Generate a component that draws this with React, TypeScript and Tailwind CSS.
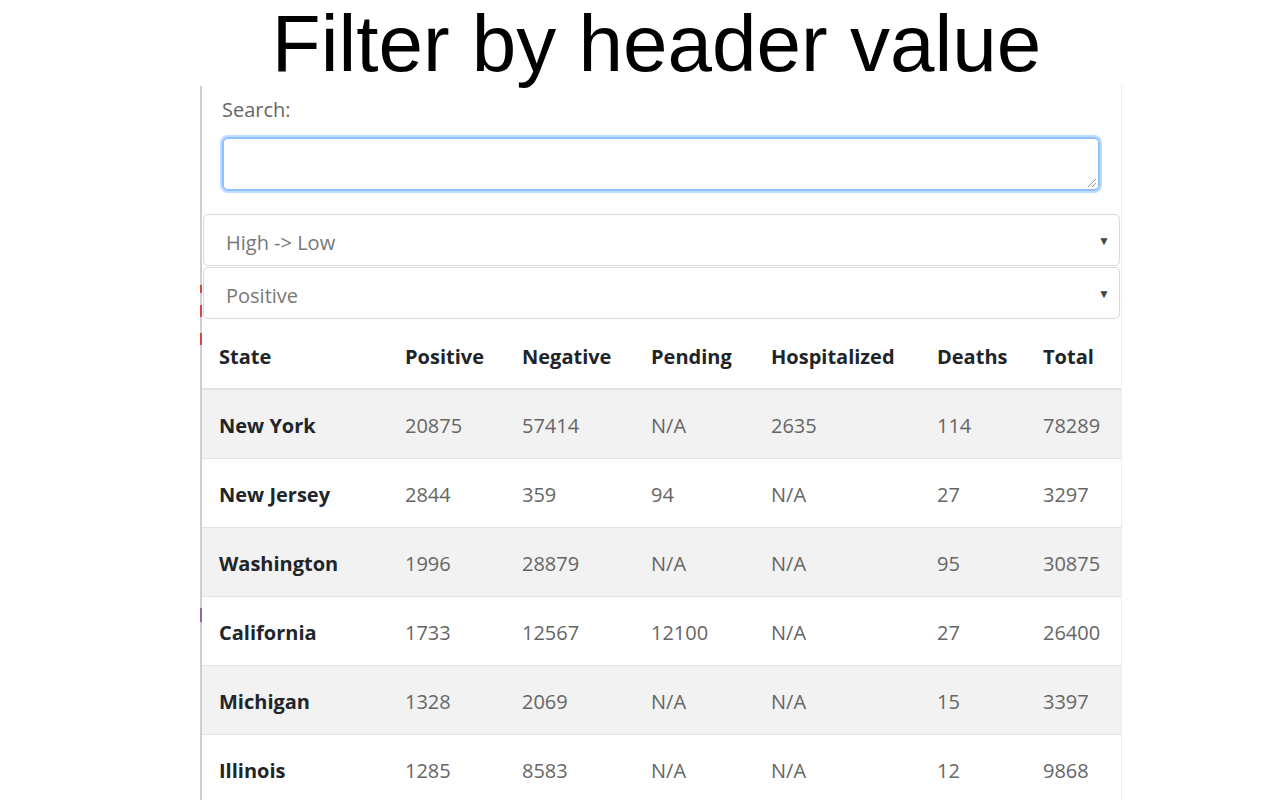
type Row = {
  state: string;
  positive: string;
  negative: string;
  pending: string;
  hospitalized: string;
  deaths: string;
  total: string;
};

const ROWS: Row[] = [
  { state: "New York", positive: "20875", negative: "57414", pending: "N/A", hospitalized: "2635", deaths: "114", total: "78289" },
  { state: "New Jersey", positive: "2844", negative: "359", pending: "94", hospitalized: "N/A", deaths: "27", total: "3297" },
  { state: "Washington", positive: "1996", negative: "28879", pending: "N/A", hospitalized: "N/A", deaths: "95", total: "30875" },
  { state: "California", positive: "1733", negative: "12567", pending: "12100", hospitalized: "N/A", deaths: "27", total: "26400" },
  { state: "Michigan", positive: "1328", negative: "2069", pending: "N/A", hospitalized: "N/A", deaths: "15", total: "3397" },
  { state: "Illinois", positive: "1285", negative: "8583", pending: "N/A", hospitalized: "N/A", deaths: "12", total: "9868" },
];

const HEADERS = ["State", "Positive", "Negative", "Pending", "Hospitalized", "Deaths", "Total"];

function SelectBox({ label }: { label: string }) {
  return (
    <div className="mx-px flex h-[52px] items-center justify-between rounded-[5px] border border-[#d9d9d9] bg-white pl-[22px] pr-[9px]">
      <span className="pt-[5px] text-[20px] text-[#777]">{label}</span>
      <span className="pt-[1px] text-[12px] text-[#444]">▼</span>
    </div>
  );
}

export default function App() {
  return (
    <div className="h-[800px] overflow-hidden bg-white font-['Open_Sans',sans-serif]">
      <h1 className="h-[86px] pl-[33px] pt-[4px] text-center font-['Liberation_Sans',Arial,sans-serif] text-[80px] leading-[80px] text-black">
        Filter by header value
      </h1>

      <div className="relative ml-[200px] w-[922px] border-l-2 border-r border-l-[#cfcfcf] border-r-[#eeeeee]">
        {/* stray marks on the left edge */}
        <span className="absolute left-[-2px] top-[199px] h-[8px] w-[2px] bg-[#d64545]" />
        <span className="absolute left-[-2px] top-[219px] h-[12px] w-[2px] bg-[#d64545]" />
        <span className="absolute left-[-2px] top-[247px] h-[12px] w-[2px] bg-[#d64545]" />
        <span className="absolute left-[-2px] top-[522px] h-[14px] w-[2px] bg-[#8a6aa0]" />

        <div className="px-[20px] pt-[10px]">
          <label className="block text-[20px] leading-[28px] text-[#666]">Search:</label>
          <div className="mt-[13px] mr-[1px] h-[54px] rounded-[6px] border-2 border-[#8ec0ff] shadow-[0_0_0_2px_rgba(160,205,255,0.7)]">
            <div className="flex h-full items-end justify-end pb-[1px] pr-[1px]">
              <svg width="12" height="12" viewBox="0 0 12 12">
                <path d="M11 3 L3 11 M11 7 L7 11" stroke="#999" strokeWidth="1" />
              </svg>
            </div>
          </div>
        </div>

        <div className="mt-[23px] flex flex-col gap-[1px]">
          <SelectBox label="High -> Low" />
          <SelectBox label="Positive" />
        </div>

        <table className="w-[919px] table-fixed border-collapse">
          <colgroup>
            <col className="w-[186px]" />
            <col className="w-[117px]" />
            <col className="w-[129px]" />
            <col className="w-[120px]" />
            <col className="w-[166px]" />
            <col className="w-[106px]" />
            <col className="w-[95px]" />
          </colgroup>
          <thead>
            <tr className="h-[70px] border-b-2 border-[#dee2e6]">
              {HEADERS.map((h) => (
                <th key={h} className="pl-[17px] pt-[6px] text-left text-[20px] font-bold text-[#212529]">
                  {h}
                </th>
              ))}
            </tr>
          </thead>
          <tbody>
            {ROWS.map((r, i) => (
              <tr key={r.state} className={`h-[69px] border-t border-[#dee2e6] ${i % 2 === 0 ? "bg-[#f2f2f2]" : "bg-white"}`}>
                <td className="pl-[17px] pt-[4px] text-[20px] font-bold text-[#212529]">{r.state}</td>
                <td className="pl-[17px] pt-[4px] text-[20px] text-[#666]">{r.positive}</td>
                <td className="pl-[17px] pt-[4px] text-[20px] text-[#666]">{r.negative}</td>
                <td className="pl-[17px] pt-[4px] text-[20px] text-[#666]">{r.pending}</td>
                <td className="pl-[17px] pt-[4px] text-[20px] text-[#666]">{r.hospitalized}</td>
                <td className="pl-[17px] pt-[4px] text-[20px] text-[#666]">{r.deaths}</td>
                <td className="pl-[17px] pt-[4px] text-[20px] text-[#666]">{r.total}</td>
              </tr>
            ))}
          </tbody>
        </table>
      </div>
    </div>
  );
}
